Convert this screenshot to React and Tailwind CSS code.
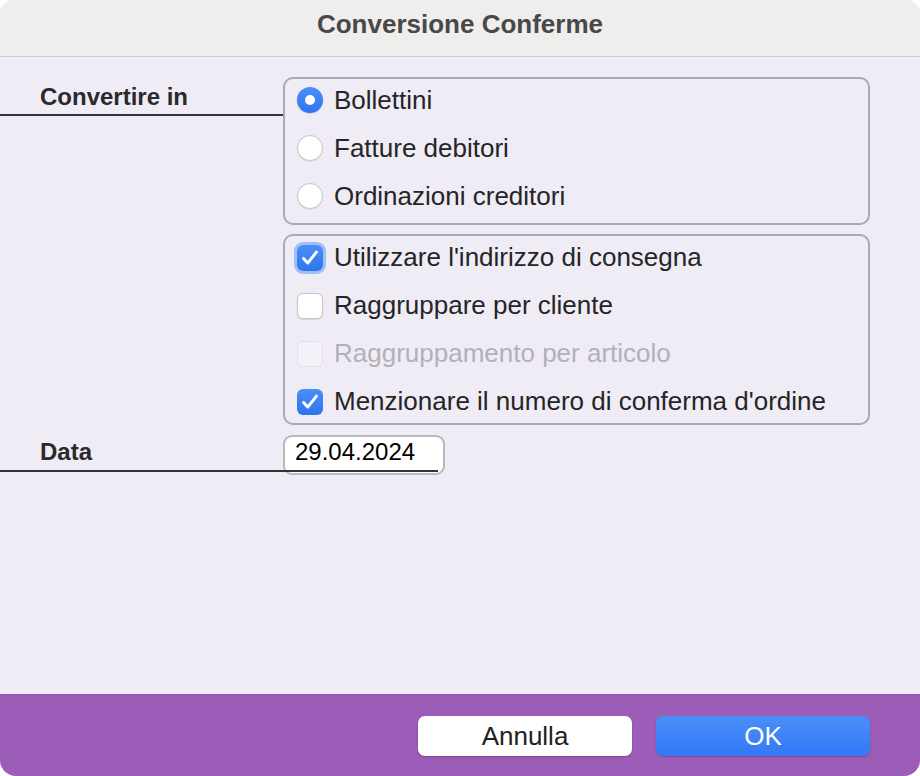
const font = { fontFamily: '"Liberation Sans", Arial, sans-serif' };

function Radio({ checked, label }) {
  return (
    <div className="flex h-12 shrink-0 items-center gap-[11px]">
      {checked ? (
        <span className="flex h-[26px] w-[26px] items-center justify-center rounded-full bg-gradient-to-b from-[#4b8ff8] to-[#2f74ef] shadow-[0_0.5px_1px_rgba(0,0,0,0.3)]">
          <span className="h-[10px] w-[10px] rounded-full bg-white" />
        </span>
      ) : (
        <span className="h-[26px] w-[26px] rounded-full border border-[#c9c7cc] bg-white shadow-[0_0.5px_1px_rgba(0,0,0,0.12)]" />
      )}
      <span className="text-[26px] text-[#252525]">{label}</span>
    </div>
  );
}

function Check() {
  return (
    <svg viewBox="0 0 24 24" className="h-[22px] w-[22px]" fill="none">
      <path
        d="M5 12.5l4.5 5L19 5.5"
        stroke="white"
        strokeWidth="3.2"
        strokeLinecap="round"
        strokeLinejoin="round"
      />
    </svg>
  );
}

function Checkbox({ checked, disabled, focused, label }) {
  let box;
  if (checked) {
    box = (
      <span
        className={`flex h-[26px] w-[26px] items-center justify-center rounded-[6px] bg-gradient-to-b from-[#4b8ff8] to-[#2f74ef] ${
          focused ? 'ring-[3px] ring-[#9fc0f6]' : ''
        }`}
      >
        <Check />
      </span>
    );
  } else if (disabled) {
    box = <span className="h-[26px] w-[26px] rounded-[6px] border border-[#e2dfe8] bg-[#f4f2f8]" />;
  } else {
    box = (
      <span className="h-[26px] w-[26px] rounded-[6px] border border-[#c9c7cc] bg-white shadow-[0_0.5px_1px_rgba(0,0,0,0.12)]" />
    );
  }
  return (
    <div className="flex h-12 shrink-0 items-center gap-[11px]">
      {box}
      <span className={`text-[26px] ${disabled ? 'text-[#b3b1b7]' : 'text-[#252525]'}`}>{label}</span>
    </div>
  );
}

export default function App() {
  return (
    <div className="h-[776px] w-[920px] bg-white" style={font}>
      <div className="flex h-full w-full flex-col overflow-hidden rounded-t-[14px] rounded-b-[16px] bg-[#efecf6]">
        <header className="flex h-[57px] shrink-0 items-center justify-center border-b border-[#cfcdd2] bg-[#efeeec]">
          <h1 className="pb-[8px] text-[26px] font-bold text-[#484848]">Conversione Conferme</h1>
        </header>

        <main className="flex-1 pt-5">
          <div className="flex">
            <div className="flex h-[39px] w-[283px] shrink-0 items-end border-b-2 border-[#333] pb-[5px] pl-10 text-[24px] font-bold leading-none text-[#2a2a2a]">
              Convertire in
            </div>
            <div className="flex h-[148px] w-[587px] flex-col overflow-hidden rounded-[10px] border-2 border-[#aaa9ad] px-[12px]">
              <div className="-mt-[3px]">
                <Radio checked label="Bollettini" />
                <Radio label="Fatture debitori" />
                <Radio label="Ordinazioni creditori" />
              </div>
            </div>
          </div>

          <div className="ml-[283px] mt-[9px] flex h-[191px] w-[587px] flex-col justify-center overflow-hidden rounded-[10px] border-2 border-[#aaa9ad] px-[12px]">
            <Checkbox checked focused label="Utilizzare l'indirizzo di consegna" />
            <Checkbox label="Raggruppare per cliente" />
            <Checkbox disabled label="Raggruppamento per articolo" />
            <Checkbox checked label="Menzionare il numero di conferma d'ordine" />
          </div>

          <div className="relative mt-[10px] flex">
            <div className="absolute left-[283px] top-0 flex h-[40px] w-[162px] items-center rounded-[9px] border-2 border-[#b9b8bc] bg-white pb-[6px] pl-[10px] text-[24px] text-black">
              29.04.2024
            </div>
            <div className="relative flex h-[37px] w-[438px] shrink-0 items-end border-b-2 border-[#333] pb-[6px] pl-10 text-[24px] font-bold leading-none text-[#2a2a2a]">
              Data
            </div>
          </div>
        </main>

        <footer className="flex h-[82px] shrink-0 items-start justify-end gap-6 border-t border-[#9256ad] bg-[#9c5db8] pr-[50px] pt-[21px]">
          <button className="h-10 w-[214px] rounded-[7px] bg-white text-[26px] text-[#222] shadow-[0_1px_2px_rgba(0,0,0,0.25)]">
            Annulla
          </button>
          <button className="h-10 w-[214px] rounded-[7px] bg-gradient-to-b from-[#4a8ff7] to-[#3478f6] text-[26px] text-white shadow-[0_1px_2px_rgba(0,0,0,0.2)]">
            OK
          </button>
        </footer>
      </div>
    </div>
  );
}
